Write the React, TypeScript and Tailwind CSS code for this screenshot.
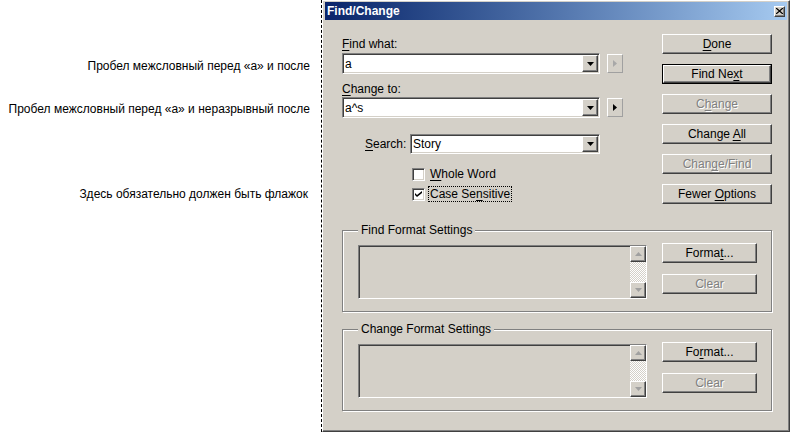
import React from 'react';

const raised =
  'border border-t-white border-l-white border-r-[#404040] border-b-[#404040] shadow-[inset_-1px_-1px_0_#808080]';
const sunken =
  'border border-t-[#808080] border-l-[#808080] border-r-white border-b-white shadow-[inset_1px_1px_0_#404040,inset_-1px_-1px_0_#d4d0c8]';
const disabledText = 'text-[#808080] [text-shadow:1px_1px_0_#fff]';

function Btn({
  children,
  disabled,
  def,
  className = '',
}: {
  children: React.ReactNode;
  disabled?: boolean;
  def?: boolean;
  className?: string;
}) {
  return (
    <div className={`h-[20px] flex ${def ? 'border border-black' : ''} ${className}`}>
      <div
        className={`flex-1 flex items-center justify-center bg-[#d4d0c8] ${raised} ${
          disabled ? disabledText : 'text-black'
        }`}
      >
        <span className="whitespace-pre">{children}</span>
      </div>
    </div>
  );
}

function Down({ color = '#000' }: { color?: string }) {
  return (
    <svg width="7" height="4" viewBox="0 0 7 4">
      <path d="M0 0h7L3.5 4z" fill={color} />
    </svg>
  );
}

function DropBtn({ h }: { h: string }) {
  return (
    <div className={`w-[16px] ${h} flex items-center justify-center bg-[#d4d0c8] ${raised}`}>
      <Down />
    </div>
  );
}

function ArrowBtn({ disabled }: { disabled?: boolean }) {
  return (
    <div className="w-[16px] h-[19px] flex items-center justify-center bg-[#d4d0c8] border border-t-white border-l-white border-r-[#a0a0a0] border-b-[#a0a0a0]">
      <svg width="4" height="7" viewBox="0 0 4 7">
        <path d="M0 0v7l4-3.5z" fill={disabled ? '#a8a8a8' : '#000'} />
      </svg>
    </div>
  );
}

function Combo({ value, w, h, btnH }: { value: string; w: string; h: string; btnH: string }) {
  return (
    <div className={`${w} ${h} bg-white ${sunken} flex items-center pr-[1px]`}>
      <span className="flex-1 pl-[2px] leading-[14px]">{value}</span>
      <DropBtn h={btnH} />
    </div>
  );
}

function Checkbox({ checked, children }: { checked?: boolean; children: React.ReactNode }) {
  return (
    <div className="flex items-center h-[14px]">
      <div className={`w-[13px] h-[13px] bg-white ${sunken} flex items-center justify-center`}>
        {checked && (
          <svg width="7" height="7" viewBox="0 0 7 7">
            <path d="M0 2l2 2 5-4v2L2 6 0 4z" fill="#000" />
          </svg>
        )}
      </div>
      {children}
    </div>
  );
}

function U({ children }: { children: React.ReactNode }) {
  return <span className="underline underline-offset-2">{children}</span>;
}

function ScrollArrow({ up }: { up?: boolean }) {
  return (
    <div className={`w-[16px] h-[16px] flex items-center justify-center bg-[#d4d0c8] ${raised}`}>
      <svg width="7" height="4" viewBox="0 0 7 4" className={up ? 'rotate-180' : ''}>
        <path d="M0 0h7L3.5 4z" fill="#a0a0a0" />
      </svg>
    </div>
  );
}

function FormatGroup({ title, fmt }: { title: string; fmt: React.ReactNode }) {
  return (
    <fieldset className="border border-[#808080] shadow-[inset_1px_1px_0_#fff,1px_1px_0_#fff] pl-[15px] pr-[13px] pb-[12px]">
      <legend className="px-[3px] leading-[14px] bg-[#d4d0c8]">{title}</legend>
      <div className="flex items-start">
        <div className={`mt-[8px] h-[54px] w-[289px] flex ${sunken}`}>
          <div className="flex-1" />
          <div className="w-[16px] flex flex-col">
            <ScrollArrow up />
            <div className="flex-1 bg-[repeating-conic-gradient(#d4d0c8_0_25%,#ffffff_0_50%)] bg-[length:2px_2px]" />
            <ScrollArrow />
          </div>
        </div>
        <div className="ml-[15px] mt-[6px] w-[95px] flex flex-col gap-[11px]">
          <Btn>{fmt}</Btn>
          <Btn disabled>Clear</Btn>
        </div>
      </div>
    </fieldset>
  );
}

export default function App() {
  return (
    <div className="w-[790px] h-[432px] bg-white flex text-[12px] text-black font-['Liberation_Sans',Arial,sans-serif] overflow-hidden">
      {/* annotations */}
      <div className="w-[321px] flex flex-col items-end pr-[11px] pt-[59px] leading-[14px]">
        <div>Пробел межсловный перед «а» и после</div>
        <div className="mt-[29px]">Пробел межсловный перед «а» и неразрывный после</div>
        <div className="mt-[71px] pr-[2px]">Здесь обязательно должен быть флажок</div>
      </div>

      {/* dialog */}
      <div className="flex-1 flex border-l border-dashed border-black">
        <div className="flex-1 flex flex-col bg-[#d4d0c8] border border-t-white border-l-white border-r-[#404040] border-b-[#404040] shadow-[inset_-1px_-1px_0_#808080] px-[2px] pt-[1px]">
          <div className="h-[18px] flex items-center pl-[2px] pr-[2px] bg-gradient-to-r from-[#0a246a] to-[#a6caf0]">
            <span className="flex-1 font-bold text-white leading-[14px]">Find/Change</span>
            <div className={`w-[11px] h-[11px] flex items-center justify-center bg-[#d4d0c8] ${raised}`}>
              <svg width="7" height="6" viewBox="0 0 7 6">
                <path d="M0 0l7 6M7 0L0 6" stroke="#000" strokeWidth="1.3" />
              </svg>
            </div>
          </div>

          <div className="flex flex-col pl-[17px] pr-[15px]">
            <div className="flex">
              <div className="flex-1 flex flex-col pt-[17px] leading-[14px]">
                <div className="h-[14px]">
                  <U>F</U>ind what:
                </div>
                <div className="mt-[2px] flex items-center gap-[7px]">
                  <Combo value="a" w="w-[258px]" h="h-[21px]" btnH="h-[17px]" />
                  <ArrowBtn disabled />
                </div>
                <div className="mt-[8px] h-[14px]">
                  <U>C</U>hange to:
                </div>
                <div className="mt-[1px] flex items-center gap-[7px]">
                  <Combo value="a^s" w="w-[258px]" h="h-[21px]" btnH="h-[17px]" />
                  <ArrowBtn />
                </div>
                <div className="mt-[16px] flex items-center">
                  <span className="ml-[23px] w-[40px]">
                    <U>S</U>earch:
                  </span>
                  <div className="ml-[5px]">
                    <Combo value="Story" w="w-[190px]" h="h-[20px]" btnH="h-[16px]" />
                  </div>
                </div>
                <div className="mt-[13px] ml-[70px]">
                  <Checkbox>
                    <span className="ml-[4px] px-[1px]">
                      <U>W</U>hole Word
                    </span>
                  </Checkbox>
                </div>
                <div className="mt-[6px] ml-[70px]">
                  <Checkbox checked>
                    <span className="ml-[4px] px-[1px] outline outline-1 outline-dotted outline-black">
                      Case Se<U>n</U>sitive
                    </span>
                  </Checkbox>
                </div>
              </div>

              <div className="w-[110px] pt-[14px] flex flex-col gap-[10px]">
                <Btn>
                  <U>D</U>one
                </Btn>
                <Btn def>
                  Find Ne<U>x</U>t
                </Btn>
                <Btn disabled>
                  C<U>h</U>ange
                </Btn>
                <Btn>
                  Change <U>A</U>ll
                </Btn>
                <Btn disabled>
                  Chan<U>g</U>e/Find
                </Btn>
                <Btn>
                  Fewer <U>O</U>ptions
                </Btn>
              </div>
            </div>

            <div className="mt-[19px]">
              <FormatGroup
                title="Find Format Settings"
                fmt={
                  <>
                    Forma<U>t</U>...
                  </>
                }
              />
            </div>
            <div className="mt-[10px]">
              <FormatGroup
                title="Change Format Settings"
                fmt={
                  <>
                    Fo<U>r</U>mat...
                  </>
                }
              />
            </div>
          </div>
        </div>
      </div>
    </div>
  );
}
